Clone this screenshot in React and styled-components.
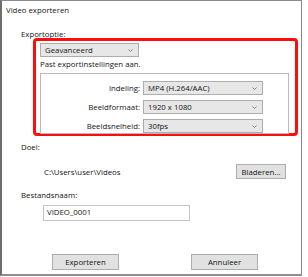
import React from "react";
import styled, {createGlobalStyle} from "styled-components";

const GlobalStyle = createGlobalStyle`
  html, body {
    margin: 0;
    padding: 0;
    background: #ffffff;
  }
  body {
    font-family: "Open Sans", "Noto Sans", sans-serif;
    font-size: 7.8px;
    color: #141414;
  }
`

const Window = styled.div`
  box-sizing: border-box;
  width: 302px;
  height: 276px;
  border-top: 1px solid #8a8a8a;
  border-left: 2px solid #6e6e6e;
  border-right: 1px solid #8a8a8a;
  border-bottom: 2px solid #8e8e8e;
  background: #ffffff;
  display: flex;
  flex-direction: column;
`

const Title = styled.div`
  height: 19px;
  line-height: 19px;
  padding-left: 4px;
`

const Body = styled.div`
  padding-left: 19px;
  display: flex;
  flex-direction: column;
  flex: 1;
`

const Label = styled.div`
  line-height: 10px;
  height: 10px;
  margin-top: ${p => p.$top || 0}px;
`

const Highlight = styled.div`
  box-sizing: border-box;
  margin-left: 12px;
  margin-top: -1px;
  width: 265px;
  height: 98px;
  border: 3px solid #ff0d0d;
  border-radius: 4px;
  padding: 2px 6px 0 4px;
  display: flex;
  flex-direction: column;
`

const Select = styled.div`
  box-sizing: border-box;
  width: ${p => p.$width}px;
  height: 14px;
  background: #e7e7e7;
  border: 1px solid #adadad;
  display: flex;
  align-items: center;
  justify-content: space-between;
  padding: 0 5px 0 4px;
  line-height: 12px;
`

const Hint = styled.div`
  line-height: 10px;
  margin-top: 2px;
`

const Group = styled.div`
  box-sizing: border-box;
  margin-top: 4px;
  height: 63px;
  border: 1px solid #b9b9b9;
  background: #ffffff;
  padding: 7px 0 0 0;
  display: grid;
  grid-template-columns: 99px auto;
  grid-auto-rows: 14px;
  row-gap: 5px;
  column-gap: 3px;
  align-items: center;
`

const RowLabel = styled.div`
  text-align: right;
  line-height: 14px;
`

const Chevron = () => (
  <svg width="5" height="3" viewBox="0 0 5 3">
    <path d="M0.5 0.5 L2.5 2.5 L4.5 0.5" fill="none" stroke="#6a6a6a" strokeWidth="0.8"/>
  </svg>
)

const PathRow = styled.div`
  display: flex;
  align-items: center;
  justify-content: space-between;
  margin-top: 12px;
  padding-left: 23px;
  width: 242px;
  height: 15px;
`

const Button = styled.div`
  box-sizing: border-box;
  width: ${p => p.$width}px;
  height: ${p => p.$height || 16}px;
  background: #e1e1e1;
  border: 1px solid #adadad;
  display: flex;
  align-items: center;
  justify-content: center;
`

const Input = styled.div`
  box-sizing: border-box;
  margin-top: 5px;
  margin-left: 22px;
  width: 147px;
  height: 16px;
  border: 1px solid #c4c4c4;
  padding-left: 3px;
  line-height: 13px;
`

const Footer = styled.div`
  margin-top: auto;
  margin-bottom: 4px;
  padding-left: 31px;
  display: flex;
  gap: 72px;
`

const rows = [
  ["Indeling:", "MP4 (H.264/AAC)"],
  ["Beeldformaat:", "1920 x 1080"],
  ["Beeldsnelheid:", "30fps"],
]

export default function App() {
  return <>
    <GlobalStyle/>
    <Window>
      <Title>Video exporteren</Title>
      <Body>
        <Label $top={9}>Exportoptie:</Label>
        <Highlight>
          <Select $width={99}>
            <span>Geavanceerd</span>
            <Chevron/>
          </Select>
          <Hint>Past exportinstellingen aan.</Hint>
          <Group>
            {rows.map(([label, value]) => (
              <React.Fragment key={label}>
                <RowLabel>{label}</RowLabel>
                <Select $width={120}>
                  <span>{value}</span>
                  <Chevron/>
                </Select>
              </React.Fragment>
            ))}
          </Group>
        </Highlight>
        <Label $top={6}>Doel:</Label>
        <PathRow>
          <span>C:\Users\user\Videos</span>
          <Button $width={50} $height={15}>Bladeren...</Button>
        </PathRow>
        <Label $top={11}>Bestandsnaam:</Label>
        <Input>VIDEO_0001</Input>
        <Footer>
          <Button $width={67}>Exporteren</Button>
          <Button $width={67}>Annuleer</Button>
        </Footer>
      </Body>
    </Window>
  </>
}
